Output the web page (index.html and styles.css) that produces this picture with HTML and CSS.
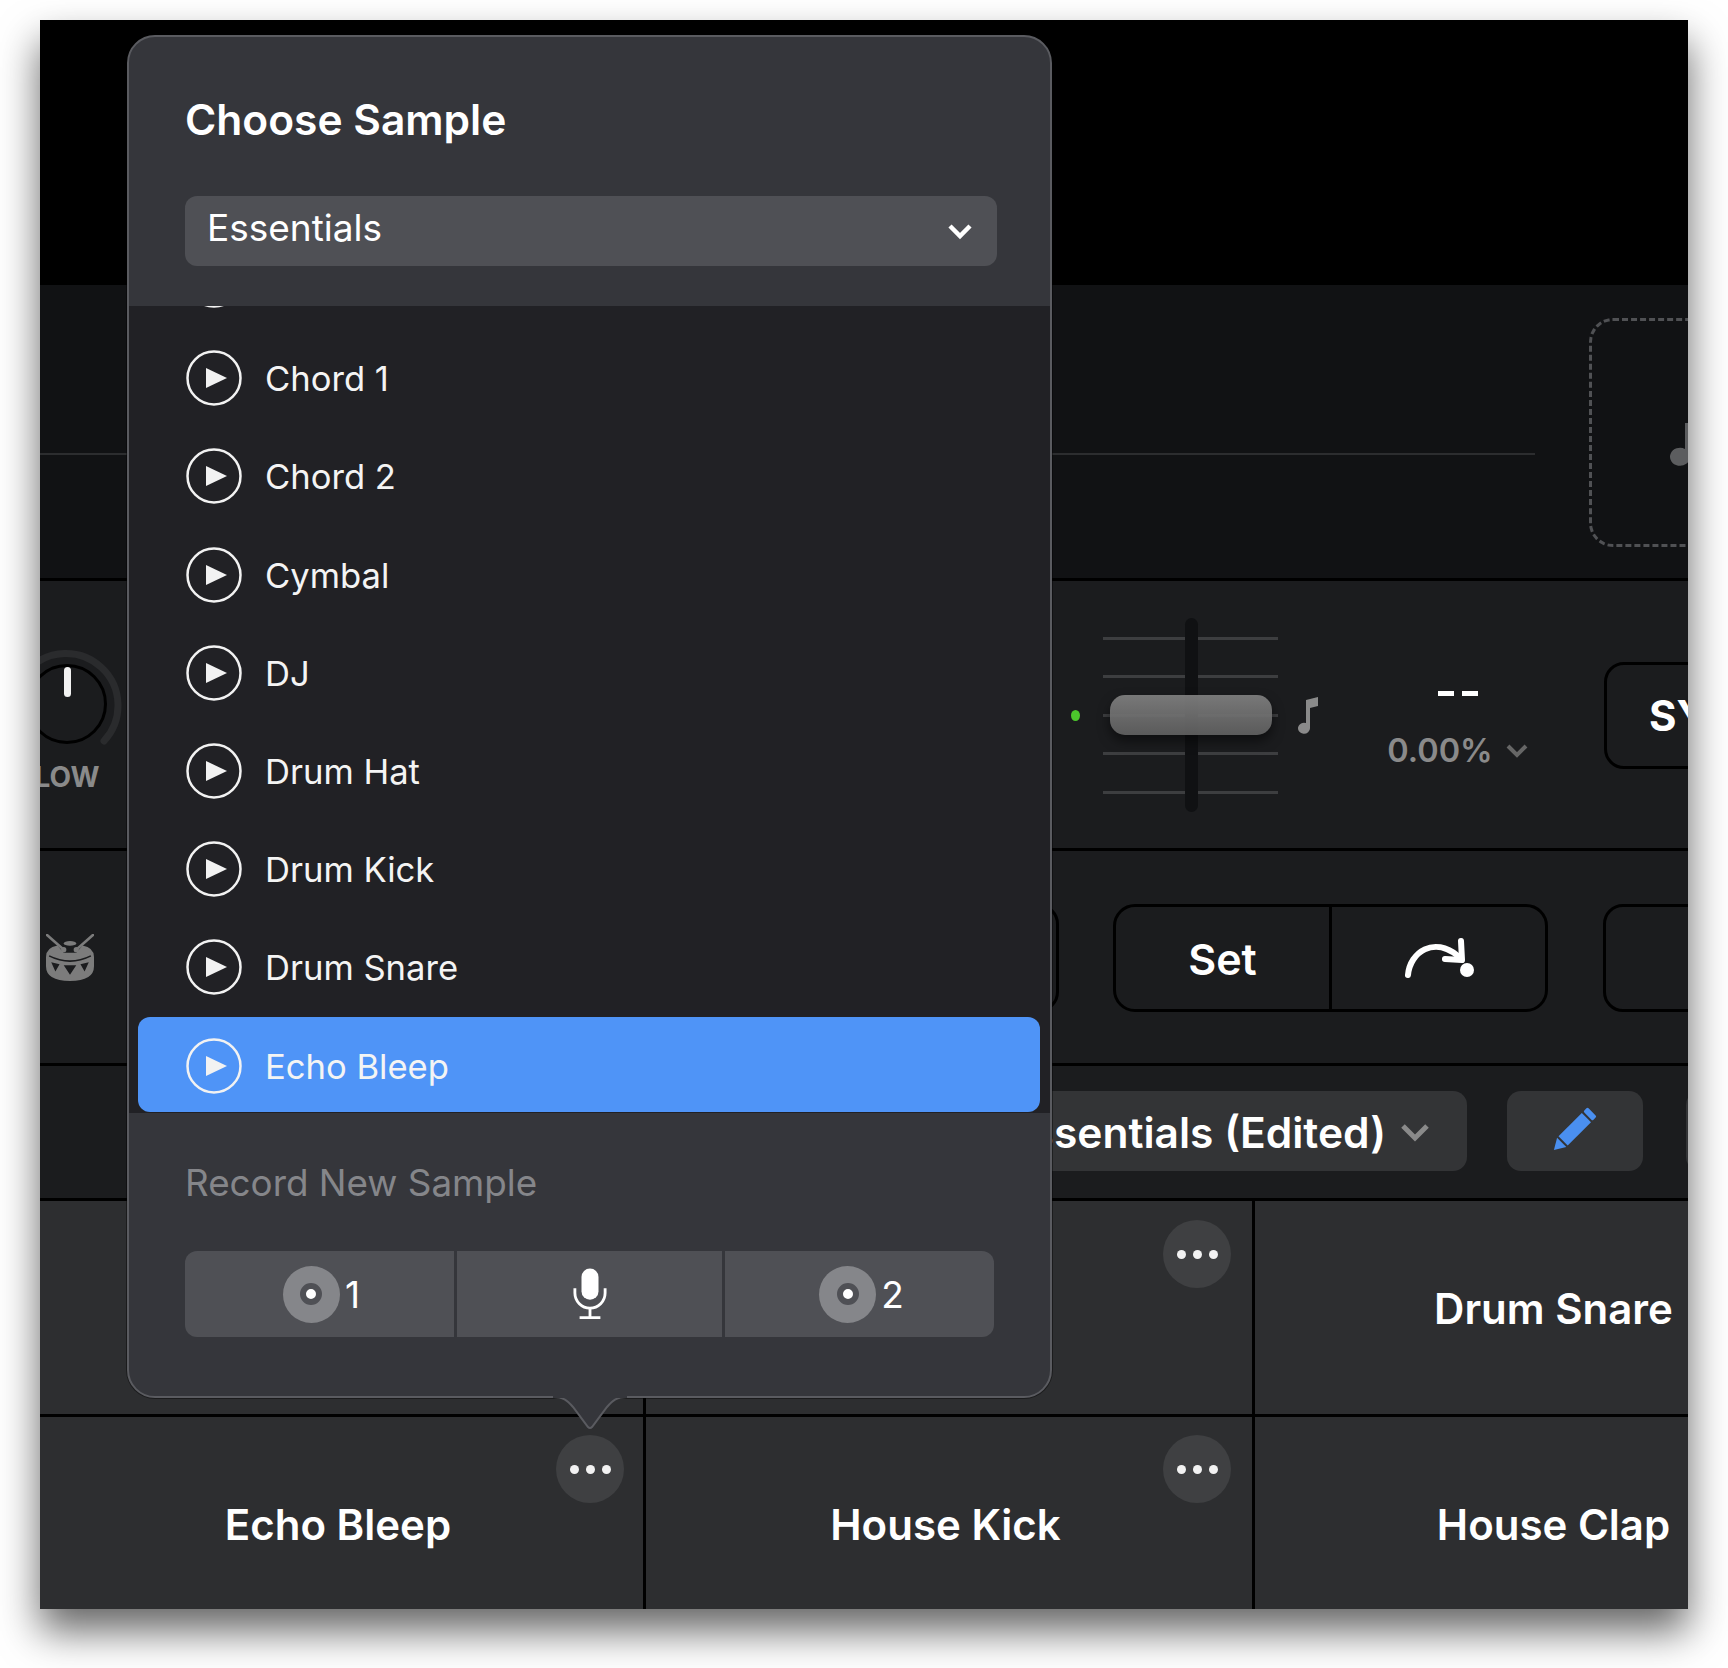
FILE: index.html
```html
<!DOCTYPE html>
<html lang="en">
<head>
<meta charset="utf-8">
<title>Choose Sample</title>
<link rel="stylesheet" href="styles.css">
</head>
<body>
<div class="window">
  <div class="row-top"></div>

  <div class="row-wave">
    <div class="wave-line"></div>
    <div class="drop-box">
      <svg class="drop-note" viewBox="0 0 30 60"><path d="M22 12v34a10 9 0 1 1-5-8V12z" fill="#5c5d5f"/></svg>
    </div>
  </div>

  <div class="row-controls">
    <div class="knob-cell">
      <div class="knob">
        <svg class="knob-arc" viewBox="0 0 110 110"><path d="M16 21A52 52 0 1 1 92 92" fill="none" stroke="#2a2b2d" stroke-width="7" stroke-linecap="round"/></svg>
        <span class="knob-pointer"></span>
      </div>
      <div class="knob-label">LOW</div>
    </div>
    <span class="led"></span>
    <div class="fader">
      <div class="ticks"><i></i><i></i><i></i><i></i><i></i></div>
      <span class="fader-track"></span>
      <span class="fader-thumb"></span>
    </div>
    <svg class="note" viewBox="0 0 22 38"><path d="M9 4 21 1v9l-8 2v20a6 5.500 0 1 1-4-5z" fill="#8a8a8a"/></svg>
    <div class="pitch">
      <div class="pitch-dash"><i></i><i></i></div>
      <div class="pitch-val">0.00%<svg class="pitch-chev" viewBox="0 0 24 16"><path d="M3 3l9 9 9-9" fill="none" stroke="#666" stroke-width="4"/></svg></div>
    </div>
    <div class="hw-btn sync">SYNC</div>
  </div>

  <div class="row-cue">
    <svg class="drum" viewBox="0 0 46 46">
      <path d="M1 1l16 14M45 1L29 15" fill="none" stroke="#7c7c7c" stroke-width="2.500" stroke-linecap="round"/>
      <circle cx="17" cy="15" r="2.500" fill="#7c7c7c"/>
      <circle cx="29" cy="15" r="2.500" fill="#7c7c7c"/>
      <ellipse cx="23" cy="9" rx="6" ry="2.200" fill="#7c7c7c"/>
      <path d="M0 22Q0 13 11 11L17 18H29L35 11Q46 13 46 22V31Q46 45 23 45Q0 45 0 31Z" fill="#7c7c7c"/>
      <path d="M3 21Q23 31 43 21" fill="none" stroke="#1b1c1e" stroke-width="1.500"/>
      <path d="M5 27l8 2-4 7zM17 30h12l-6 9zM41 27l-8 2 4 7z" fill="#1b1c1e"/>
    </svg>
    <div class="hw-btn hidden-btn"></div>
    <div class="set-group">
      <div class="set-cell set-text">Set</div>
      <div class="set-cell">
        <svg class="cue-arrow" viewBox="0 0 70 40"><path d="M4 37C6 14 30-2 54 18" fill="none" stroke="#fff" stroke-width="6" stroke-linecap="round"/><path d="M57 3l1 19-17-1" fill="none" stroke="#fff" stroke-width="6" stroke-linecap="round" stroke-linejoin="round"/><circle cx="63" cy="32" r="7" fill="#fff"/></svg>
      </div>
    </div>
    <div class="hw-btn next-btn"></div>
  </div>

  <div class="row-kit">
    <div class="kit-select">Essentials (Edited)<svg class="kit-chev" viewBox="0 0 30 20"><path d="M3 4l12 12L27 4" fill="none" stroke="#8a8a8a" stroke-width="5"/></svg></div>
    <div class="kit-btn">
      <svg class="pencil" viewBox="0 0 42 42"><g transform="rotate(45 21 21)" fill="#4a8ff0"><rect x="14.500" y="-6" width="13" height="6" rx="1.500"/><rect x="14.500" y="2" width="13" height="33"/><path d="M14.500 37h13l-6.500 11z"/></g></svg>
    </div>
    <div class="kit-btn edge"></div>
  </div>

  <div class="pads">
    <div class="pad"><span class="pad-more"><i></i><i></i><i></i></span></div>
    <div class="pad"><span class="pad-more"><i></i><i></i><i></i></span></div>
    <div class="pad"><span class="pad-name">Drum Snare</span></div>
    <div class="pad lower first-col"><span class="pad-more"><i></i><i></i><i></i></span><span class="pad-name">Echo Bleep</span></div>
    <div class="pad lower"><span class="pad-more"><i></i><i></i><i></i></span><span class="pad-name">House Kick</span></div>
    <div class="pad lower"><span class="pad-name">House Clap</span></div>
  </div>

  <div class="popover">
    <div class="pop-head">
      <div class="pop-title">Choose Sample</div>
      <div class="pop-select"><span class="pop-select-text">Essentials</span>
        <svg class="pop-chev" viewBox="0 0 26 18"><path d="M3 4l10 10L23 4" fill="none" stroke="#fff" stroke-width="4.500"/></svg>
      </div>
    </div>
    <div class="pop-list">
      <div class="item first"><svg class="play" viewBox="0 0 56 56"><circle cx="28" cy="28" r="26.500" fill="none" stroke="#f2f2f2" stroke-width="2.500"/><path d="M20 18l21 10-21 10z" fill="#f2f2f2"/></svg></div>
      <div class="item"><svg class="play" viewBox="0 0 56 56"><circle cx="28" cy="28" r="26.500" fill="none" stroke="#f2f2f2" stroke-width="2.500"/><path d="M20 18l21 10-21 10z" fill="#f2f2f2"/></svg>Chord 1</div>
      <div class="item"><svg class="play" viewBox="0 0 56 56"><circle cx="28" cy="28" r="26.500" fill="none" stroke="#f2f2f2" stroke-width="2.500"/><path d="M20 18l21 10-21 10z" fill="#f2f2f2"/></svg>Chord 2</div>
      <div class="item"><svg class="play" viewBox="0 0 56 56"><circle cx="28" cy="28" r="26.500" fill="none" stroke="#f2f2f2" stroke-width="2.500"/><path d="M20 18l21 10-21 10z" fill="#f2f2f2"/></svg>Cymbal</div>
      <div class="item"><svg class="play" viewBox="0 0 56 56"><circle cx="28" cy="28" r="26.500" fill="none" stroke="#f2f2f2" stroke-width="2.500"/><path d="M20 18l21 10-21 10z" fill="#f2f2f2"/></svg>DJ</div>
      <div class="item"><svg class="play" viewBox="0 0 56 56"><circle cx="28" cy="28" r="26.500" fill="none" stroke="#f2f2f2" stroke-width="2.500"/><path d="M20 18l21 10-21 10z" fill="#f2f2f2"/></svg>Drum Hat</div>
      <div class="item"><svg class="play" viewBox="0 0 56 56"><circle cx="28" cy="28" r="26.500" fill="none" stroke="#f2f2f2" stroke-width="2.500"/><path d="M20 18l21 10-21 10z" fill="#f2f2f2"/></svg>Drum Kick</div>
      <div class="item"><svg class="play" viewBox="0 0 56 56"><circle cx="28" cy="28" r="26.500" fill="none" stroke="#f2f2f2" stroke-width="2.500"/><path d="M20 18l21 10-21 10z" fill="#f2f2f2"/></svg>Drum Snare</div>
      <div class="item selected"><svg class="play" viewBox="0 0 56 56"><circle cx="28" cy="28" r="26.500" fill="none" stroke="#f2f2f2" stroke-width="2.500"/><path d="M20 18l21 10-21 10z" fill="#f2f2f2"/></svg>Echo Bleep</div>
    </div>
    <div class="pop-foot">
      <div class="rec-label">Record New Sample</div>
      <div class="rec-seg">
        <div class="rec-cell"><span class="disc"><span class="disc-hole"></span></span><span class="rec-num">1</span></div>
        <div class="rec-cell mic-cell">
          <svg class="mic" viewBox="0 0 36 54"><rect x="9" y="0" width="18" height="33" rx="9" fill="#fff"/><path d="M2 21v5a16 16 0 0 0 32 0v-5" fill="none" stroke="#fff" stroke-width="3"/><path d="M18 42v9M7 52h22" fill="none" stroke="#fff" stroke-width="3"/></svg>
        </div>
        <div class="rec-cell"><span class="disc"><span class="disc-hole"></span></span><span class="rec-num">2</span></div>
      </div>
    </div>
    <svg class="pop-tail" viewBox="0 0 90 36"><path d="M0 1h8c10 0 14 3 20 10L43 31q2 2 4 0L62 11c6-7 10-10 20-10h8" fill="#35363b" stroke="#5a5b60" stroke-width="2"/><rect x="8" y="-2" width="74" height="4" fill="#35363b"/></svg>
  </div>
</div>
</body>
</html>
```
FILE: styles.css
```css
* { box-sizing: border-box; }
html, body { margin: 0; padding: 0; background: #fff; }
body { width: 1728px; height: 1668px; overflow: hidden; padding: 20px 40px 0; font-family: Inter, "Liberation Sans", sans-serif; color: #fff; }

.window { position: relative; width: 1648px; height: 1589px; display: flex; flex-direction: column; background: #2d2e30; box-shadow: 0 22px 38px rgba(0,0,0,.6); }
.row-top, .row-wave, .row-controls, .row-cue, .row-kit, .pads { overflow: hidden; }

.row-top { height: 265px; background: #000; flex: none; }

.row-wave { height: 296px; flex: none; display: flex; align-items: flex-start; background: #111214; border-bottom: 3px solid #000; }
.wave-line { width: 1495px; height: 2px; margin-top: 168px; background: #2c2d2f; flex: none; }
.drop-box { flex: none; width: 260px; height: 229px; margin: 33px 0 0 54px; border: 3px dashed #505154; border-radius: 24px; padding: 90px 0 0 76px; }
.drop-note { width: 30px; height: 60px; display: block; }

.row-controls { height: 270px; flex: none; display: flex; align-items: flex-start; background: #1b1c1e; border-bottom: 3px solid #000; }
.knob-cell { flex: none; width: 120px; margin-left: -33px; padding-top: 83px; display: flex; flex-direction: column; align-items: center; }
.knob { position: relative; width: 80px; height: 80px; border: 3px solid #000; border-radius: 50%; display: flex; justify-content: center; }
.knob-arc { position: absolute; left: -18px; top: -18px; width: 110px; height: 110px; }
.knob-pointer { width: 7px; height: 30px; border-radius: 4px; background: #f2f2f2; }
.knob-label { margin-top: 16px; font-size: 28px; line-height: 34px; font-weight: 700; color: #8a8a8a; }

.led { flex: none; width: 9px; height: 11px; margin: 129px 0 0 944px; border-radius: 50%; background: #4cc72c; }

.fader { position: relative; flex: none; width: 175px; height: 194px; margin: 37px 0 0 23px; display: flex; align-items: center; }
.ticks { width: 100%; height: 157px; display: flex; flex-direction: column; justify-content: space-between; }
.ticks i { display: block; height: 3px; background: #3d3e40; }
.fader-track { position: absolute; left: 82px; top: 0; width: 13px; height: 194px; border-radius: 7px; background: #101113; }
.fader-thumb { position: absolute; left: 7px; top: 77px; width: 162px; height: 40px; border-radius: 15px; background: linear-gradient(rgba(128,128,128,.92), rgba(96,96,96,.92)); box-shadow: 0 6px 12px rgba(0,0,0,.5); }

.note { flex: none; width: 22px; height: 38px; margin: 115px 0 0 19px; }

.pitch { flex: none; width: 170px; margin: 97px 0 0 54px; display: flex; flex-direction: column; align-items: center; }
.pitch-dash { display: flex; gap: 8px; height: 30px; align-items: center; }
.pitch-dash i { width: 16px; height: 5px; background: #fff; }
.pitch-val { margin-top: 23px; font-size: 32.500px; line-height: 40px; font-weight: 600; color: #8a8a8a; display: flex; align-items: center; gap: 12px; }
.pitch-chev { width: 24px; height: 16px; }

.hw-btn { flex: none; border: 3px solid #000; border-radius: 20px; background: #1b1c1e; }
.sync { width: 200px; height: 107px; margin: 81px 0 0 61px; padding-left: 42px; font-size: 42px; line-height: 102px; font-weight: 700; white-space: nowrap; }

.row-cue { height: 215px; flex: none; display: flex; align-items: center; padding-top: 2px; background: #1b1c1e; border-bottom: 3px solid #000; }
.drum { flex: none; width: 48px; height: 48px; margin-left: 6px; }
.hidden-btn { width: 200px; height: 108px; margin-left: 765px; }
.set-group { flex: none; width: 435px; height: 108px; margin-left: 54px; display: flex; border: 3px solid #000; border-radius: 22px; }
.set-cell { flex: 1; display: flex; align-items: center; justify-content: center; font-size: 43px; font-weight: 600; }
.set-text { padding-top: 1px; }
.set-cell + .set-cell { border-left: 3px solid #000; }
.cue-arrow { width: 70px; height: 40px; }
.next-btn { width: 200px; height: 108px; margin-left: 55px; }

.row-kit { height: 135px; flex: none; display: flex; align-items: center; padding-bottom: 2px; background: #1b1c1e; border-bottom: 3px solid #000; }
.kit-select { flex: none; width: 767px; height: 80px; margin-left: 660px; display: flex; align-items: center; justify-content: flex-end; gap: 14px; padding: 2px 37px 0 0; border-radius: 14px; background: #333436; font-size: 42.500px; font-weight: 600; white-space: nowrap; }
.kit-chev { width: 30px; height: 20px; }
.kit-btn { flex: none; width: 136px; height: 80px; margin-left: 40px; display: flex; align-items: center; justify-content: center; padding-right: 4px; border-radius: 14px; background: #333436; }
.kit-btn.edge { margin-left: 43px; }
.pencil { width: 42px; height: 42px; overflow: visible; }

.pads { flex: 1; display: grid; grid-template-columns: 603px 606px 604px; grid-template-rows: 213px 198px; column-gap: 3px; row-gap: 3px; background: #000; }
.pad { position: relative; display: flex; align-items: center; justify-content: center; padding: 2px 7px 0 0; background: #2d2e30; }
.pad.lower { padding-top: 16px; }
.pad-name { font-size: 42px; font-weight: 600; white-space: nowrap; }
.pad-more { position: absolute; right: 21px; top: 19px; width: 68px; height: 68px; border-radius: 50%; background: #3f4042; display: flex; align-items: center; justify-content: center; gap: 7px; }
.pad-more i { width: 9px; height: 9px; border-radius: 50%; background: #f2f2f2; }
.pad.lower .pad-more { top: 18px; }
.pad.first-col .pad-more { right: 19px; }

.popover { position: absolute; left: 87px; top: 15px; width: 925px; height: 1363px; display: flex; flex-direction: column; background: #35363b; border: 2px solid #5a5b60; border-radius: 28px; box-shadow: 0 0 0 1px rgba(0,0,0,.4); }
.pop-head { flex: none; height: 269px; padding: 58px 53px 0 56px; border-radius: 26px 26px 0 0; }
.pop-title { font-size: 42.500px; line-height: 50px; font-weight: 600; }
.pop-select { height: 70px; margin-top: 51px; padding: 0 24px 0 22px; border-radius: 12px; background: #4f5055; display: flex; align-items: center; justify-content: space-between; font-size: 37px; }
.pop-select-text { margin-top: -8px; }
.pop-chev { width: 26px; height: 18px; }

.pop-list { flex: none; height: 807px; overflow: hidden; background: #212125; padding: 0 10px 0 9px; }
.item { height: 98.200px; display: flex; align-items: center; gap: 23px; padding-left: 48px; border-radius: 12px; font-size: 34.600px; color: #f4f4f4; }
.item.first { margin-top: -75px; }
.item.selected { height: 95px; padding-top: 3px; background: #4f94f7; }
.play { flex: none; width: 56px; height: 56px; }

.pop-foot { flex: 1; padding: 48px 55px 0 56px; }
.rec-label { font-size: 36.800px; line-height: 44px; color: #85868a; }
.rec-seg { display: flex; width: 809px; height: 86px; margin-top: 46px; gap: 3px; }
.rec-cell { flex: 1; display: flex; align-items: center; justify-content: center; gap: 5px; padding-left: 4px; background: #4f5055; }
.rec-cell.mic-cell { padding-left: 0; }
.rec-cell:first-child { border-radius: 12px 0 0 12px; }
.rec-cell:last-child { border-radius: 0 12px 12px 0; }
.disc { flex: none; width: 57px; height: 57px; border-radius: 50%; background: #85868a; display: flex; align-items: center; justify-content: center; }
.disc-hole { width: 22px; height: 22px; border-radius: 50%; border: 6px solid #4f5055; background: #fff; }
.rec-num { font-size: 37px; }
.mic { width: 34px; height: 52px; }

.pop-tail { position: absolute; left: 416px; top: 1359px; width: 90px; height: 36px; overflow: visible; }
```
